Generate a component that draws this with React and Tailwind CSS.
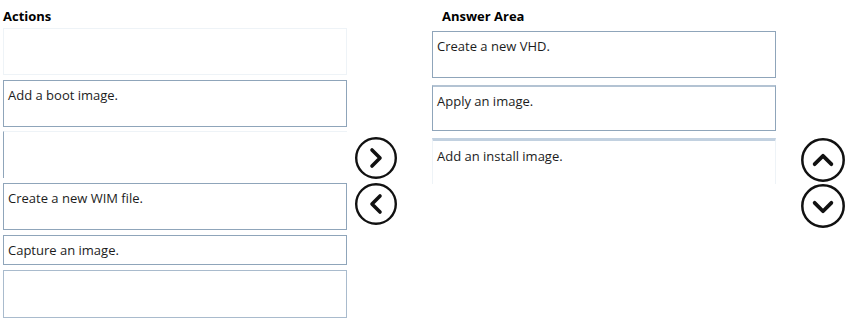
import React from 'react';

const Circle = ({ dir, size = 44 }) => {
  const paths = {
    right: 'M18 14 L26 22 L18 30',
    left: 'M26 14 L18 22 L26 30',
    up: 'M14 26 L22 18 L30 26',
    down: 'M14 19 L22 27 L30 19',
  };
  return (
    <svg width={size} height={size} viewBox="0 0 44 44" className="block shrink-0">
      <circle cx="22" cy="22" r="19.8" fill="white" stroke="#111" strokeWidth="2.4" />
      <path d={paths[dir]} fill="none" stroke="#111" strokeWidth="3.6" strokeLinecap="round" strokeLinejoin="round" />
    </svg>
  );
};

const Box = ({ text, className = '' }) => (
  <div className={`px-[4px] pt-[5px] text-[13px] leading-[18px] text-[#1c1c1c] ${className}`}>
    {text}
  </div>
);

export default function App() {
  return (
    <div
      className="w-[847px] h-[318px] bg-white flex overflow-hidden"
      style={{ fontFamily: '"Open Sans", "Noto Sans", sans-serif' }}
    >
      {/* Actions */}
      <div className="ml-[3px] w-[344px] shrink-0 flex flex-col">
        <div className="h-[28px] pt-[7px] text-[13px] font-bold leading-[18px] text-black">Actions</div>
        <Box text="" className="h-[47px] border border-[#eef3f7]" />
        <Box text="Add a boot image." className="mt-[5px] h-[47px] border border-[#8fa5ba]" />
        <Box text="" className="mt-[4px] h-[48px] border-l border-t border-l-[#8fa5ba] border-t-[#eef3f7]" />
        <Box text="Create a new WIM file." className="mt-[5px] h-[47px] border border-[#8fa5ba]" />
        <Box text="Capture an image." className="mt-[5px] h-[30px] pt-[4px] border border-[#8fa5ba]" />
        <Box text="" className="mt-[5px] h-[48px] border border-[#a9bbcd]" />
      </div>

      {/* move buttons */}
      <div className="ml-[7px] w-[44px] shrink-0 pt-[136px] flex flex-col gap-[2px]">
        <Circle dir="right" />
        <Circle dir="left" />
      </div>

      {/* Answer Area */}
      <div className="ml-[34px] w-[344px] shrink-0 flex flex-col">
        <div className="h-[31px] pt-[7px] pl-[10px] text-[13px] font-bold leading-[18px] text-black">Answer Area</div>
        <Box text="Create a new VHD." className="h-[47px] border border-[#8fa5ba]" />
        <Box text="Apply an image." className="mt-[7px] h-[46px] border border-[#8fa5ba] border-t-[#b3c3d3] border-t-2" />
        <Box text="Add an install image." className="mt-[7px] h-[46px] border-t-[3px] border-x border-t-[#c2d1e0] border-x-[#eef3f7] pt-[6px]" />
      </div>

      {/* order buttons */}
      <div className="ml-[24px] w-[46px] shrink-0 pt-[137px] flex flex-col">
        <Circle dir="up" size={46} />
        <Circle dir="down" size={46} />
      </div>
    </div>
  );
}
